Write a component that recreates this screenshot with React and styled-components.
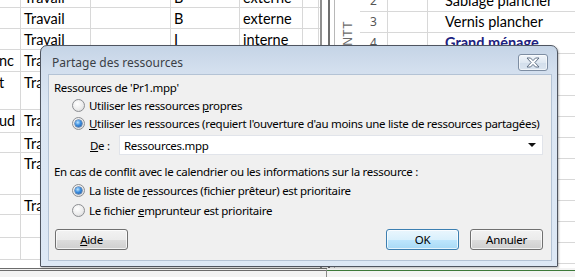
import React from "react";
import styled, { createGlobalStyle } from "styled-components";

const GlobalStyle = createGlobalStyle`
  html, body {
    margin: 0;
    padding: 0;
    background: #fff;
    overflow: hidden;
  }
  *, *::before, *::after {
    box-sizing: border-box;
  }
`;

// fond : feuille Project (tableau + gantt)
const leftCols = [22, 70, 80, 69, 63, 16];

const leftRows = [
  { h: 21, cells: ["", "Travail", "", "B", "externe", ""] },
  { h: 21, cells: ["", "Travail", "", "B", "externe", ""] },
  { h: 21, cells: ["", "Travail", "", "I", "interne", ""] },
  { h: 22, cells: ["nc", "Travail", "", "", "", ""] },
  { h: 38, cells: ["t", "Travail", "", "", "", ""] },
  { h: 23, cells: ["ud", "Travail", "", "", "", ""] },
  { h: 20, cells: ["", "Travail", "", "", "", ""] },
  { h: 42, cells: ["", "Travail", "", "", "", ""] },
  { h: 20, cells: ["", "Travail", "", "", "", ""] },
  { h: 23, cells: ["", "", "", "", "", ""] },
  { h: 22, cells: ["", "", "", "", "", ""] },
];

const rightRows = [
  { num: "2", name: "Sablage plancher" },
  { num: "3", name: "Vernis plancher" },
  { num: "4", name: "Grand ménage", summary: true },
  { num: "5", name: "" },
  { num: "6", name: "" },
  { num: "7", name: "" },
  { num: "8", name: "" },
  { num: "9", name: "" },
  { num: "10", name: "" },
  { num: "11", name: "" },
  { num: "12", name: "" },
  { num: "13", name: "" },
  { num: "14", name: "" },
];

function Radio({ checked }) {
  return <RadioCircle $checked={checked}>{checked && <RadioDot />}</RadioCircle>;
}

export default function App() {
  return (
    <>
      <GlobalStyle />
      <Screen>
        <Sheet>
          <Panes>
            <LeftPane>
              {leftRows.map((row, i) => (
                <SheetRow key={i} $h={row.h}>
                  {row.cells.map((c, j) => (
                    <SheetCell key={j} $w={leftCols[j]} $first={j === 0}>
                      {c}
                    </SheetCell>
                  ))}
                </SheetRow>
              ))}
            </LeftPane>
            <Splitter>
              <SplitLine />
            </Splitter>
            <RightPane>
              <SideLabel>
                <SideText>DIAGRAMME DE GANTT</SideText>
              </SideLabel>
              <GanttTable>
                {rightRows.map((r) => (
                  <GanttRow key={r.num}>
                    <NumCell>{r.num}</NumCell>
                    <InfoCell />
                    <NameCell $summary={r.summary}>{r.name}</NameCell>
                  </GanttRow>
                ))}
              </GanttTable>
            </RightPane>
          </Panes>
          <BottomBar>
            <BottomLeft />
            <BottomRight />
          </BottomBar>
        </Sheet>

        <Dialog>
          <TitleBar>
            <Title>Partage des ressources</Title>
            <CloseButton>
              <svg width="16" height="11" viewBox="0 0 16 11">
                <path
                  d="M2 1 H5.5 L8 3.6 L10.5 1 H14 L9.9 5.5 L14 10 H10.5 L8 7.4 L5.5 10 H2 L6.1 5.5 Z"
                  fill="#fdfeff"
                  stroke="#55657a"
                  strokeWidth="0.9"
                  strokeLinejoin="round"
                />
              </svg>
            </CloseButton>
          </TitleBar>
          <Client>
            <Heading>Ressources de 'Pr1.mpp'</Heading>
            <RadioGroup>
              <RadioRow $h={18}>
                <Radio />
                <span>
                  Utiliser les ressources <u>p</u>ropres
                </span>
              </RadioRow>
              <RadioRow $h={18}>
                <Radio checked />
                <span>
                  <u>U</u>tiliser les ressources (requiert l'ouverture d'au moins une liste de ressources partagées)
                </span>
              </RadioRow>
            </RadioGroup>
            <FieldRow>
              <FieldLabel>
                <u>D</u>e :
              </FieldLabel>
              <Combo>
                <span>Ressources.mpp</span>
                <ComboArrow />
              </Combo>
            </FieldRow>
            <Heading $top={9}>
              En cas de conflit avec le calendrier ou les informations sur la ressource :
            </Heading>
            <RadioGroup>
              <RadioRow $h={20}>
                <Radio checked />
                <span>
                  La liste de <u>r</u>essources (fichier prêteur) est prioritaire
                </span>
              </RadioRow>
              <RadioRow $h={20}>
                <Radio />
                <span>
                  Le fichier <u>e</u>mprunteur est prioritaire
                </span>
              </RadioRow>
            </RadioGroup>
            <ButtonBar>
              <Button>
                <u>A</u>ide
              </Button>
              <Spacer />
              <Button $default>OK</Button>
              <Button>Annuler</Button>
            </ButtonBar>
          </Client>
        </Dialog>
      </Screen>
    </>
  );
}

const Screen = styled.div`
  position: relative;
  width: 575px;
  height: 277px;
  overflow: hidden;
  background: #fff;
`;

const Sheet = styled.div`
  display: flex;
  flex-direction: column;
  height: 100%;
  font-family: Lato, "Liberation Sans", sans-serif;
  font-size: 14.5px;
  color: #000;
`;

const Panes = styled.div`
  display: flex;
  height: 268px;
  overflow: hidden;
`;

const LeftPane = styled.div`
  width: 320px;
  margin-top: -13px;
  flex-shrink: 0;
`;

const SheetRow = styled.div`
  display: flex;
  height: ${(p) => p.$h}px;
  border-bottom: 1px solid #d8d8d8;
`;

const SheetCell = styled.div`
  width: ${(p) => p.$w}px;
  flex-shrink: 0;
  border-right: 1px solid #d8d8d8;
  padding: 2px 0 0 ${(p) => (p.$first ? 0 : 3)}px;
  margin-left: ${(p) => (p.$first ? -1 : 0)}px;
  white-space: nowrap;
  overflow: hidden;
  line-height: 17px;
`;

const Splitter = styled.div`
  width: 15px;
  flex-shrink: 0;
  border-left: 2px solid #8f8f8f;
  border-right: 1px solid #b8b8b8;
  display: flex;
  justify-content: center;
  padding-left: 2px;
`;

const SplitLine = styled.div`
  width: 2px;
  background: #6f6f6f;
`;

const RightPane = styled.div`
  flex: 1;
  display: flex;
  min-width: 0;
`;

const SideLabel = styled.div`
  width: 25px;
  flex-shrink: 0;
  display: flex;
  flex-direction: column;
  align-items: center;
  padding-top: 21px;
  overflow: hidden;
`;

const SideText = styled.div`
  writing-mode: vertical-rl;
  transform: rotate(180deg);
  font-family: "Liberation Sans", sans-serif;
  font-size: 12px;
  letter-spacing: 0.5px;
  color: #6a6a6a;
  white-space: nowrap;
`;

const GanttTable = styled.div`
  flex: 1;
  margin-top: -9px;
  min-width: 0;
`;

const GanttRow = styled.div`
  display: flex;
  height: 21px;
  border-bottom: 1px solid #d8d8d8;
  line-height: 20px;
`;

const NumCell = styled.div`
  width: 28px;
  flex-shrink: 0;
  text-align: center;
  border-right: 1px solid #d8d8d8;
  font-family: "Noto Sans", sans-serif;
  font-size: 12px;
  color: #555;
`;

const InfoCell = styled.div`
  width: 40px;
  flex-shrink: 0;
  border-right: 1px solid #d8d8d8;
`;

const NameCell = styled.div`
  flex: 1;
  padding-left: 17px;
  white-space: nowrap;
  overflow: hidden;
  color: ${(p) => (p.$summary ? "#1c2180" : "#000")};
  font-weight: ${(p) => (p.$summary ? 700 : 400)};
`;

const BottomBar = styled.div`
  display: flex;
  flex: 1;
  background: #f3f3f3;
`;

const BottomLeft = styled.div`
  width: 327px;
  border-top: 3px double #6c6c6c;
  border-right: 1px solid #8a8a8a;
`;

const BottomRight = styled.div`
  flex: 1;
  margin-top: 2px;
  border-top: 1px solid #3d7a3a;
`;

// boîte de dialogue
const Dialog = styled.div`
  position: absolute;
  left: 40px;
  top: 45px;
  width: 518px;
  height: 222px;
  display: flex;
  flex-direction: column;
  padding: 0 5px 5px 7px;
  border: 1px solid #4f5560;
  border-radius: 7px 7px 1px 1px;
  background: linear-gradient(180deg, #c5d4e6 0px, #d3dfee 24px, #dbe6f3 60px, #dde8f5 100%);
  box-shadow: 1px 1px 2px rgba(0, 0, 0, 0.25);
  font-family: "Noto Sans", "Open Sans", sans-serif;
  font-size: 11.5px;
  letter-spacing: -0.3px;
  color: #000;
`;

const TitleBar = styled.div`
  height: 28px;
  flex-shrink: 0;
  display: flex;
  align-items: flex-start;
  padding: 9px 4px 0 4px;
`;

const Title = styled.div`
  flex: 1;
  font-size: 12px;
  letter-spacing: 0;
  line-height: 16px;
  color: #3b3f46;
`;

const CloseButton = styled.div`
  width: 30px;
  height: 17px;
  margin-top: -1px;
  border: 1px solid #7d8da2;
  border-radius: 3px;
  background: linear-gradient(180deg, #f1f5fa 0%, #dfe8f2 50%, #d2deeb 51%, #dbe5f0 100%);
  box-shadow: inset 0 0 0 1px rgba(255, 255, 255, 0.6);
  display: flex;
  align-items: center;
  justify-content: center;
`;

const Client = styled.div`
  flex: 1;
  display: flex;
  flex-direction: column;
  background: #f0f0f0;
  border: 1px solid #b4c3d5;
  padding: 5px 8px 0 5px;
`;

const Heading = styled.div`
  line-height: 16px;
  margin-top: ${(p) => p.$top || 0}px;
  white-space: nowrap;
`;

const RadioGroup = styled.div`
  display: flex;
  flex-direction: column;
  padding-left: 18px;
`;

const RadioRow = styled.div`
  display: flex;
  align-items: center;
  gap: 4px;
  height: ${(p) => p.$h}px;
  white-space: nowrap;
`;

const RadioCircle = styled.span`
  width: 13px;
  height: 13px;
  flex-shrink: 0;
  border-radius: 50%;
  border: 1px solid #8c8e92;
  background: radial-gradient(circle at 40% 35%, #ffffff 0%, #ececec 55%, #d2d3d5 100%);
  display: flex;
  align-items: center;
  justify-content: center;
`;

const RadioDot = styled.span`
  width: 7px;
  height: 7px;
  border-radius: 50%;
  background: radial-gradient(circle at 40% 35%, #bfe6ff 0%, #3b8ee0 45%, #1b4f94 100%);
  box-shadow: 0 0 0 0.5px #1c4a86;
`;

const FieldRow = styled.div`
  display: flex;
  align-items: center;
  height: 20px;
  margin-top: 3px;
  padding-left: 36px;
`;

const FieldLabel = styled.span`
  width: 29px;
  flex-shrink: 0;
`;

const Combo = styled.div`
  flex: 1;
  height: 20px;
  display: flex;
  align-items: center;
  justify-content: space-between;
  padding: 0 6px 0 4px;
  background: #fff;
  border: 1px solid #e1e4ea;
`;

const ComboArrow = styled.span`
  width: 0;
  height: 0;
  border-left: 4px solid transparent;
  border-right: 4px solid transparent;
  border-top: 4px solid #111;
`;

const ButtonBar = styled.div`
  display: flex;
  align-items: center;
  gap: 11px;
  margin-top: 9px;
  padding-left: 1px;
`;

const Spacer = styled.div`
  flex: 1;
`;

const Button = styled.div`
  width: 73px;
  height: 21px;
  display: flex;
  align-items: center;
  justify-content: center;
  border-radius: 3px;
  border: 1px solid ${(p) => (p.$default ? "#3c7fb1" : "#707070")};
  background: ${(p) =>
    p.$default
      ? "linear-gradient(180deg, #eaf6fd 0%, #d9f0fc 50%, #bee6fd 51%, #a7d9f5 100%)"
      : "linear-gradient(180deg, #f2f2f2 0%, #ebebeb 50%, #dddddd 51%, #cfcfcf 100%)"};
  box-shadow: inset 0 0 0 1px rgba(255, 255, 255, 0.7);
`;
